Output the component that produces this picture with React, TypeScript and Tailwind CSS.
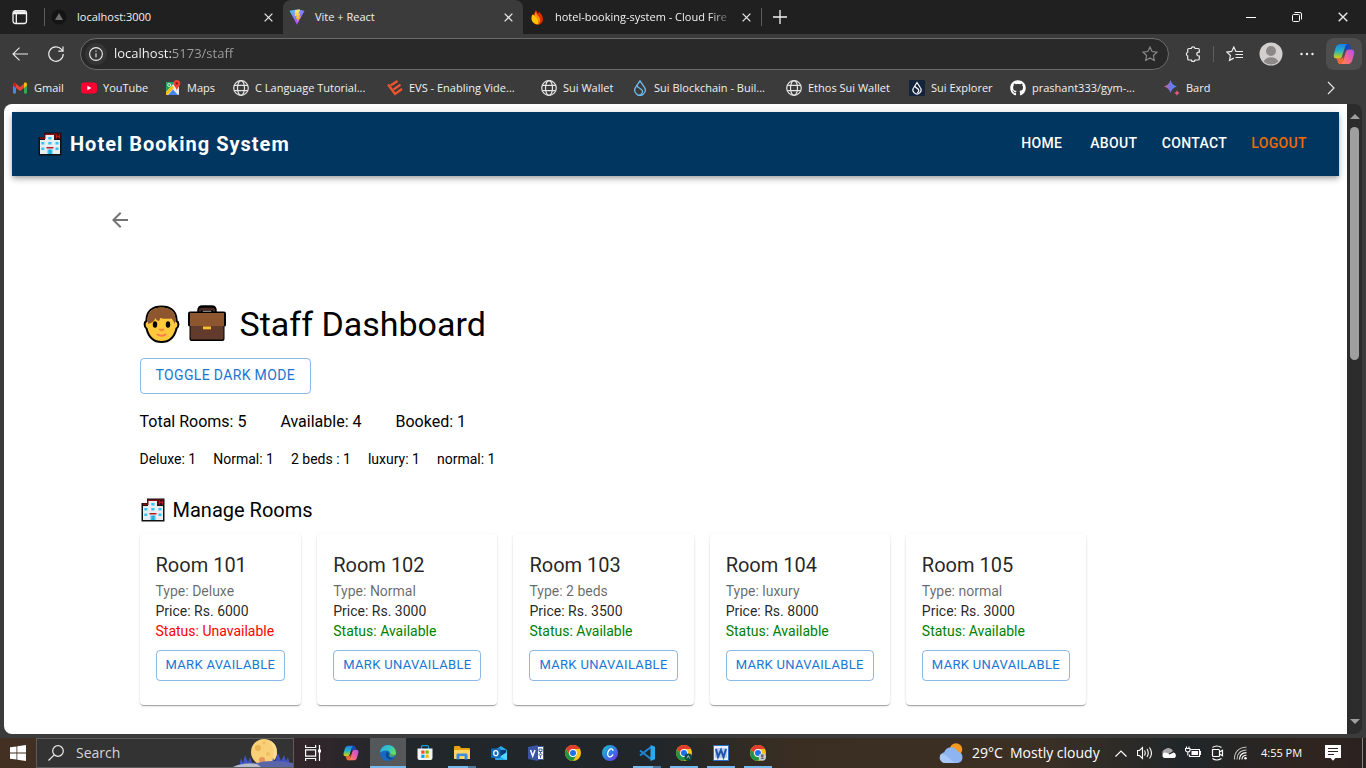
import React from "react";
import { FaGithub } from "react-icons/fa";

type IconProps = { className?: string };

/* ---------- brand marks ---------- */

function Globe({ className = "size-4" }: IconProps) {
  return (
    <svg viewBox="0 0 16 16" className={className} fill="none" stroke="#e4e4e4" strokeWidth="1.2" aria-hidden="true">
      <circle cx="8" cy="8" r="7.3" />
      <ellipse cx="8" cy="8" rx="3.5" ry="7.3" />
      <path d="M1.3 5.3h13.4M1.3 10.7h13.4" />
    </svg>
  );
}

function Gmail() {
  return (
    <svg viewBox="0 0 16 16" className="size-4" aria-hidden="true">
      <path fill="#4285f4" d="M1 4v9.4h3V7.5L1 5z" />
      <path fill="#34a853" d="M12 7.5v5.9h3V5z" />
      <path fill="#ea4335" d="M4 3.8 8 7l4-3.2V8L8 11 4 8z" />
      <path fill="#c5221f" d="M1 4.2C1 2.6 2.7 2 4 3v5L1 5.6z" />
      <path fill="#fbbc04" d="M15 4.2C15 2.6 13.300 2 12 3v5l3-2.400z" />
    </svg>
  );
}

function YouTube() {
  return (
    <svg viewBox="0 0 16 16" className="size-4" aria-hidden="true">
      <rect x="0" y="2.500" width="16" height="11" rx="3" fill="#ff0033" />
      <path fill="#fff" d="M6.400 5.700v4.600L10.400 8z" />
    </svg>
  );
}

function Maps() {
  return (
    <svg viewBox="0 0 16 16" className="size-4" aria-hidden="true">
      <rect x="1" y="2" width="13" height="13" rx="1" fill="#e9ecef" />
      <path fill="#1fa463" d="M2 2h8L1 12V3a1 1 0 0 1 1-1z" />
      <path fill="#fbbc04" d="m1 12 6-6.500L9 8l-7 7H1z" />
      <path fill="#4285f4" d="M3 15 8 9.500l5 5.500z" />
      <circle cx="4.200" cy="5" r="1.500" fill="none" stroke="#fff" strokeWidth=".8" />
      <path fill="#ea4335" d="M11.800 0a3.500 3.500 0 0 1 3.500 3.500c0 2.500-2.500 3-3.500 7-1-4-3.500-4.500-3.500-7A3.500 3.500 0 0 1 11.800 0z" />
      <circle cx="11.800" cy="3.500" r="1.300" fill="#8f1d14" />
    </svg>
  );
}

function Evs() {
  return (
    <svg viewBox="0 0 16 16" className="size-4" fill="none" stroke="#f2552c" strokeWidth="2.200" aria-hidden="true">
      <path d="M1 4.500 8 14l7-5" />
      <path d="m3.500 5.500 7-4.500M6.500 9.500l7-4.800" />
    </svg>
  );
}

function SuiDrop({ color = "#6fbcf0" }: { color?: string }) {
  return (
    <svg viewBox="0 0 16 16" className="size-4" fill="none" stroke={color} strokeWidth="1.300" aria-hidden="true">
      <path d="M8 .8 12.300 7.200a5.200 5.200 0 1 1-8.600 0z" />
      <path d="M5.200 5.300c-.5 3.200 6 2.700 5.300 6.700-.3 1.600-1.500 2.500-3 2.900" />
    </svg>
  );
}

function SuiTile() {
  return (
    <svg viewBox="0 0 16 16" className="size-4" aria-hidden="true">
      <path fill="#14243d" d="M0 0h16v16H0z" />
      <g fill="none" stroke="#fff" strokeWidth="1.200">
        <path d="m8 2.500 3.200 5a4 4 0 1 1-6.400 0z" />
        <path d="M6 6c-.2 2.300 4.300 2 3.800 4.800-.2 1-.9 1.700-1.800 1.900" />
      </g>
    </svg>
  );
}

function Bard() {
  return (
    <svg viewBox="0 0 16 16" className="size-4" aria-hidden="true">
      <defs>
        <linearGradient id="bard" x1="0" x2="1">
          <stop offset="0" stopColor="#e4607d" />
          <stop offset=".45" stopColor="#7a72e8" />
          <stop offset="1" stopColor="#2f9bf0" />
        </linearGradient>
      </defs>
      <path fill="url(#bard)" d="M6.500 0C7.800 3.700 9.300 5.200 13 6.500 9.300 7.800 7.800 9.300 6.500 13 5.200 9.300 3.700 7.800 0 6.500 3.700 5.200 5.200 3.700 6.500 0z" />
      <path fill="#dc5f83" d="M13 10.200c.6 1.700 1.200 2.300 3 2.900-1.800.6-2.400 1.200-3 2.900-.6-1.700-1.200-2.300-3-2.900 1.800-.6 2.400-1.200 3-2.900z" />
    </svg>
  );
}

function ViteLogo() {
  return (
    <svg viewBox="0 0 16 16" className="size-4" aria-hidden="true">
      <defs>
        <linearGradient id="viteBody" x1="0" y1="0" x2=".6" y2="1">
          <stop offset="0" stopColor="#41d1ff" />
          <stop offset="1" stopColor="#bd34fe" />
        </linearGradient>
        <linearGradient id="viteBolt" x1="0" y1="0" x2="0" y2="1">
          <stop offset="0" stopColor="#ffea83" />
          <stop offset="1" stopColor="#ffa800" />
        </linearGradient>
      </defs>
      <path fill="url(#viteBody)" d="M.5 1.700 8 .5l7.500 1.200L8 15.800z" />
      <path fill="url(#viteBolt)" d="M11.200.2 6 1.200l-.4 6 2-.4-.5 3.300 1.500-.4-.8 3.800L12 7.500l-2 .3 1.200-3.200-1.700.2z" />
    </svg>
  );
}

function FirebaseFlame() {
  return (
    <svg viewBox="0 0 16 16" className="size-4" aria-hidden="true">
      <path fill="#dd2c00" d="M7 1c1 1.500 1.300 2.500 1.500 3.500L10 3c2.500 2 4 4.500 4 7a5.500 5.500 0 0 1-9 4.500L4 8c.3-3 1.800-4.500 3-7z" />
      <path fill="#ffc400" d="M3.500 5.500C7 7 9.500 9 9.500 15A5.600 5.600 0 0 1 2.500 9c0-1.500.4-2.500 1-3.500z" />
      <path fill="#ff9100" d="M7 2.500c-1 2-1.500 3.200-1.200 4.500 2.600 2 3.700 4 3.700 8a5.500 5.500 0 0 0 .3-7.500C8 6 7.400 4.500 7 2.500z" />
    </svg>
  );
}

function Copilot({ className = "size-6", id }: IconProps & { id: string }) {
  return (
    <svg viewBox="0 0 24 24" className={className} aria-hidden="true">
      <defs>
        <linearGradient id={id + "a"} x1="0" y1="0" x2="0" y2="1">
          <stop offset="0" stopColor="#1c7fe8" />
          <stop offset=".5" stopColor="#27b6c4" />
          <stop offset=".8" stopColor="#97c93c" />
          <stop offset="1" stopColor="#f4c21c" />
        </linearGradient>
        <linearGradient id={id + "b"} x1="1" y1="0" x2="0" y2="1">
          <stop offset="0" stopColor="#a353ee" />
          <stop offset=".5" stopColor="#ed5fa0" />
          <stop offset="1" stopColor="#ff8a3c" />
        </linearGradient>
      </defs>
      <path fill="#1748b8" d="M13 1h3c2 0 2.600 1.300 3.200 3.500L20 7h-4c-2 0-2.700 1-3.300 3z" />
      <path fill="#ef6a35" d="M11 23H8c-2 0-2.600-1.300-3.200-3.500L4 17h4c2 0 2.700-1 3.300-3z" />
      <path fill={"url(#" + id + "a)"} d="M8.500 1h7c-1.400.5-2 2-2.600 4l-2.800 9c-.6 2-1.600 3-3.600 3H4c-2.700 0-3.800-1.800-3-5L3 5c.8-2.600 2.600-4 5.500-4z" />
      <path fill={"url(#" + id + "b)"} d="M15.500 23h-7c1.400-.5 2-2 2.600-4l2.800-9c.6-2 1.600-3 3.600-3H20c2.700 0 3.800 1.800 3 5l-2 7c-.8 2.600-2.600 4-5.500 4z" />
    </svg>
  );
}

function Hospital({ className }: IconProps) {
  return (
    <svg viewBox="0 0 24 24" className={className} role="img" aria-label="Hotel">
      <path fill="#111" d="M6 .5h17.500v23H.5V5H6z" />
      <path fill="#e8eef1" d="M2 8h5V3h9v5h6v14H2z" />
      <path fill="#8d1018" d="M6.500 1.500h16V7h-6V3h-9v4H2V5.500h4.500z" />
      <path fill="#2b0608" d="M17.500 2H23v5h-5.500z" />
      <path fill="#b51c28" d="M18 2.500h1.200v1.300h1.600V2.500H22v4h-1.200V5h-1.600v1.500H18zM8.500 15h7v1.500h-7z" />
      <path fill="#38c4f1" d="M10.300 5h3.200v2.500h-3.200zM3.300 10h3v2.500h-3zM10.300 10h3.200v2.500h-3.200zM17.500 10h3v2.500h-3zM3.300 15.500h3V18h-3zM17.500 15.500h3V18h-3zM9.500 17.500h5V22h-5z" />
      <path fill="#1687b8" d="M11.700 17.500h.7V22h-.7z" />
    </svg>
  );
}

function Person() {
  return (
    <svg viewBox="0 0 42 42" className="size-[42px]" role="img" aria-label="Staff member">
      <path d="M21.500 3.500C12.500 3.500 7 8 6.500 16v2c-2.500 1-2.500 6 0 7.500C8.500 34 14 39 21.500 39s13-5 15-13.500c2.500-1.500 2.500-6.500 0-7.500v-2C36 8 30.500 3.500 21.500 3.500z" fill="#ffc83d" stroke="#000" strokeWidth="2" />
      <path fill="#8e562e" d="M21.500 4.500C13 4.500 7.800 9 7.500 15.500l.8 5.500c3.700-1 6.200-3 7.200-6 .5 1.700 1.500 2.500 3 3 1-.5 1.500-1.500 1.500-3 4.500 1 8.500 1 11.500.5 1.500 1.500 2.500 3.300 3.200 5.500l.8-5.500C35.200 9 30 4.500 21.500 4.500z" />
      <ellipse cx="15" cy="21.500" rx="2.200" ry="3.300" />
      <ellipse cx="28" cy="21.500" rx="2.200" ry="3.300" />
      <path d="M20 26.500q1.700 1.500 3.400 0" stroke="#f78a3c" strokeWidth="2" fill="none" strokeLinecap="round" />
      <path d="M17.500 31.500q4 2.500 8 0" stroke="#fb7a4c" strokeWidth="2" fill="none" strokeLinecap="round" />
    </svg>
  );
}

function Briefcase() {
  return (
    <svg viewBox="0 0 42 42" className="size-[42px]" role="img" aria-label="Briefcase">
      <path d="M14 9V7.500Q14 5 16.500 5h9Q28 5 28 7.500V9" fill="none" stroke="#000" strokeWidth="5.500" />
      <path d="M14 10V7.500Q14 6 16 6h10q2 0 2 1.500V10" fill="none" stroke="#4b2a24" strokeWidth="2.500" />
      <path d="M4 8.500h34q2 0 2 2v11.500q0 1-1.500 1.500V36q0 2-2 2h-31q-2 0-2-2V23.500Q2 23 2 22V10.500q0-2 2-2z" fill="#000" />
      <path d="M4.500 22h33v13q0 1.500-1.500 1.500H6q-1.500 0-1.500-1.500z" fill="#633b2d" />
      <path d="M4 10h34v13H4z" fill="#8e562e" />
      <path d="M17 23.500h8v2.800h-8z" fill="#f9c22b" />
    </svg>
  );
}

/* ---------- browser chrome ---------- */

function CloseIcon({ className = "size-[9px]" }: IconProps) {
  return (
    <svg viewBox="0 0 10 10" className={className} fill="none" stroke="#e8e8e8" strokeWidth="1.400" aria-hidden="true">
      <path d="m.7.700 8.600 8.600M9.300.7.700 9.300" />
    </svg>
  );
}

function Tab({ title, icon, active = false, faded = false }: { title: string; icon: React.ReactNode; active?: boolean; faded?: boolean }) {
  return (
    <div className={active ? "flex w-60 items-center rounded-t-lg bg-[#3b3b3b] pl-1.5 pr-2.5" : "flex w-[238px] items-center pl-1.5 pr-2.5"}>
      {icon}
      <button
        type="button"
        className={
          faded
            ? "ml-2.5 min-w-0 flex-1 whitespace-nowrap text-left [mask-image:linear-gradient(to_right,#000_86%,transparent)]"
            : "ml-2.5 min-w-0 flex-1 whitespace-nowrap text-left"
        }
      >
        {title}
      </button>
      <button type="button" aria-label={"Close " + title} className="ml-2">
        <CloseIcon />
      </button>
    </div>
  );
}

function TabStrip() {
  return (
    <header className="flex h-[34px] shrink-0 bg-[#202020] text-[11px] text-[#f1f1f1]">
      <button type="button" aria-label="Tab actions" className="flex w-11 items-center pl-3">
        <svg viewBox="0 0 16 16" className="size-4" fill="none" stroke="#f4f4f4" strokeWidth="1.300" aria-hidden="true">
          <rect x="1" y="1.700" width="13.500" height="12.800" rx="2.500" />
          <path d="M1 4.500h13.500M4.300 4.500v10" />
          <path d="M2 3.200h11.500" strokeWidth="2" />
        </svg>
      </button>
      <span className="my-2 w-px bg-[#5c5c5c]" />
      <Tab
        title="localhost:3000"
        icon={
          <svg viewBox="0 0 16 16" className="size-4 shrink-0" aria-hidden="true">
            <circle cx="8" cy="8" r="7.500" fill="#141414" />
            <path d="m8 4 4 7H4z" fill="#6f6f6f" />
          </svg>
        }
      />
      <Tab title="Vite + React" active icon={<ViteLogo />} />
      <Tab title="hotel-booking-system - Cloud Fire" faded icon={<FirebaseFlame />} />
      <span className="my-2 w-px bg-[#5c5c5c]" />
      <button type="button" aria-label="New tab" className="flex w-9 items-center justify-center">
        <svg viewBox="0 0 14 14" className="size-3.5" stroke="#f4f4f4" strokeWidth="1.300" aria-hidden="true">
          <path d="M7 0v14M0 7h14" />
        </svg>
      </button>
      <div className="ml-auto flex">
        <button type="button" aria-label="Minimize" className="flex w-[46px] items-center justify-center">
          <span className="h-px w-2.5 bg-white" />
        </button>
        <button type="button" aria-label="Restore" className="flex w-[46px] items-center justify-center">
          <svg viewBox="0 0 10 10" className="size-2.5" fill="none" stroke="#fff" aria-hidden="true">
            <rect x=".5" y="2.500" width="7" height="7" rx="1" />
            <path d="M2.500.5H8q1.500 0 1.500 1.500v5.500" />
          </svg>
        </button>
        <button type="button" aria-label="Close window" className="flex w-[46px] items-center justify-center">
          <CloseIcon className="size-2.5" />
        </button>
      </div>
    </header>
  );
}

const starPath = "m8 1 2.100 4.500 4.900.6-3.600 3.400.9 4.900L8 12l-4.300 2.400.9-4.900L1 6.100l4.900-.6z";

function Toolbar() {
  return (
    <div className="flex h-10 shrink-0 items-center pr-1 text-white">
      <button type="button" aria-label="Back" className="ml-2.5 flex w-5 justify-center">
        <svg viewBox="0 0 16 14" className="h-3.5 w-4" fill="none" stroke="#ececec" strokeWidth="1.100" aria-hidden="true">
          <path d="M16 7H1M7.500.7 1 7l6.500 6.300" />
        </svg>
      </button>
      <button type="button" aria-label="Refresh" className="ml-4 flex w-5 justify-center">
        <svg viewBox="0 0 16 16" className="size-4" fill="none" stroke="#ececec" strokeWidth="1.200" aria-hidden="true">
          <path d="M15.200 8A7.200 7.200 0 1 1 13.500 3.400L14.800 5" />
          <path d="M15 .5V5.200h-4.700" />
        </svg>
      </button>
      <div className="ml-3.5 flex h-8 min-w-0 flex-1 items-center rounded-full border border-[#6b6b6b] bg-[#292929] pl-1 pr-2.5">
        <span className="flex size-[22px] items-center justify-center rounded-full bg-[#353535]">
          <svg viewBox="0 0 14 14" className="size-3.5" fill="none" stroke="#ececec" strokeWidth="1.100" aria-hidden="true">
            <circle cx="7" cy="7" r="6.400" />
            <path d="M7 6.200v4M7 3.500v1.300" />
          </svg>
        </span>
        <input
          aria-label="Address"
          defaultValue="localhost:5173/staff"
          className="ml-[7px] min-w-0 flex-1 bg-transparent bg-linear-to-r from-white from-[57px] to-[#a0a0a0] to-[57px] bg-clip-text text-[13px] text-transparent outline-none"
        />
        <button type="button" aria-label="Add to favorites">
          <svg viewBox="0 0 16 16" className="size-4" fill="none" stroke="#8d8d8d" strokeWidth="1.100" aria-hidden="true">
            <path d={starPath} />
          </svg>
        </button>
      </div>
      <button type="button" aria-label="Extensions" className="ml-4 flex size-4">
        <svg viewBox="0 0 16 16" className="size-4" fill="none" stroke="#ececec" strokeWidth="1.200" aria-hidden="true">
          <path d="M4 2.500h2.200a2 2 0 0 1 3.900 0H13q1.300 0 1.300 1.300v2.400h-.6a1.900 1.900 0 1 0 0 3.800h.6v2.700q0 1.300-1.300 1.300H10.100a2 2 0 0 1-3.900 0H4q-1.300 0-1.300-1.300V10a2 2 0 0 1 0-3.800V3.800Q2.700 2.500 4 2.500z" />
        </svg>
      </button>
      <span className="ml-3 h-4 w-px bg-[#5f5f5f]" />
      <button type="button" aria-label="Favorites" className="ml-3 flex">
        <svg viewBox="0 0 17 16" className="h-4 w-[17px]" fill="none" stroke="#ececec" strokeWidth="1.200" aria-hidden="true">
          <path d="M10.500 5.500 9.900 5.400 7.800 1 5.700 5.400.9 6.100l3.500 3.400-.9 4.900 4.300-2.300M10.500 5.500H17M9.500 8.500H17M9.500 11.500H17" />
        </svg>
      </button>
      <button type="button" aria-label="Profile" className="ml-4 flex">
        <svg viewBox="0 0 24 24" className="size-6" aria-hidden="true">
          <circle cx="12" cy="12" r="11.500" fill="#d2d0ce" />
          <circle cx="12" cy="9" r="5" fill="#8b8885" />
          <path d="M4.500 19.500Q7 15.200 12 15.200t7.500 4.300A11 11 0 0 1 12 22.500a11 11 0 0 1-7.500-3z" fill="#8b8885" />
        </svg>
      </button>
      <button type="button" aria-label="Settings and more" className="ml-4 flex">
        <svg viewBox="0 0 16 16" className="size-4" fill="#f4f4f4" aria-hidden="true">
          <circle cx="2.500" cy="8" r="1.200" />
          <circle cx="8" cy="8" r="1.200" />
          <circle cx="13.500" cy="8" r="1.200" />
        </svg>
      </button>
      <button type="button" aria-label="Copilot" className="ml-[11px] flex h-8 w-9 items-center justify-center rounded-lg bg-[#4e4e4e]">
        <Copilot id="cpTop" className="size-[22px]" />
      </button>
    </div>
  );
}

const bookmarks: { label: string; icon: React.ReactNode; width: string }[] = [
  { label: "Gmail", icon: <Gmail />, width: "w-[69px]" },
  { label: "YouTube", icon: <YouTube />, width: "w-[84px]" },
  { label: "Maps", icon: <Maps />, width: "w-[68px]" },
  { label: "C Language Tutorial...", icon: <Globe />, width: "w-[154px]" },
  { label: "EVS - Enabling Vide...", icon: <Evs />, width: "w-[154px]" },
  { label: "Sui Wallet", icon: <Globe />, width: "w-[91px]" },
  { label: "Sui Blockchain - Buil...", icon: <SuiDrop />, width: "w-[154px]" },
  { label: "Ethos Sui Wallet", icon: <Globe />, width: "w-[123px]" },
  { label: "Sui Explorer", icon: <SuiTile />, width: "w-[101px]" },
  { label: "prashant333/gym-...", icon: <FaGithub className="size-4 text-white" />, width: "w-[154px]" },
  { label: "Bard", icon: <Bard />, width: "w-[70px]" },
];

function BookmarksBar() {
  return (
    <nav aria-label="Favorites bar" className="flex h-[30px] shrink-0 items-center pb-0.5 pl-3 pr-[31px] text-[11px] text-[#f1f1f1]">
      {bookmarks.map((b) => (
        <a key={b.label} href="#" className={"flex items-center gap-1.5 whitespace-nowrap " + b.width}>
          <span className="shrink-0">{b.icon}</span>
          {b.label}
        </a>
      ))}
      <button type="button" aria-label="More favorites" className="ml-auto">
        <svg viewBox="0 0 8 14" className="h-3.5 w-2" fill="none" stroke="#e4e4e4" strokeWidth="1.200" aria-hidden="true">
          <path d="m1 1 6 6-6 6" />
        </svg>
      </button>
    </nav>
  );
}

/* ---------- the web page ---------- */

type Room = { number: number; type: string; price: number; available: boolean };

const rooms: Room[] = [
  { number: 101, type: "Deluxe", price: 6000, available: false },
  { number: 102, type: "Normal", price: 3000, available: true },
  { number: 103, type: "2 beds", price: 3500, available: true },
  { number: 104, type: "luxury", price: 8000, available: true },
  { number: 105, type: "normal", price: 3000, available: true },
];

function RoomCard({ room }: { room: Room }) {
  return (
    <article className="rounded bg-white px-4 pb-6 pt-4 text-sm/5 text-black/87 shadow-[0_2px_1px_-1px_rgba(0,0,0,0.2),0_1px_1px_0_rgba(0,0,0,0.14),0_1px_3px_0_rgba(0,0,0,0.12)]">
      <h3 className="text-xl/[31px]">Room {room.number}</h3>
      <p className="text-black/60">Type: {room.type}</p>
      <p>Price: Rs. {room.price}</p>
      <p className={room.available ? "text-[#008000]" : "text-[#ff0000]"}>Status: {room.available ? "Available" : "Unavailable"}</p>
      <button type="button" className="mt-[9px] h-[31px] whitespace-nowrap rounded border border-[#1976d2]/50 px-[9px] pb-0.5 text-[13px] tracking-wide text-[#1976d2]">
        {room.available ? "MARK UNAVAILABLE" : "MARK AVAILABLE"}
      </button>
    </article>
  );
}

function HotelPage() {
  return (
    <main className="min-w-0 flex-1 overflow-hidden rounded-l-lg bg-white p-2 font-['Roboto',sans-serif] text-black">
      <div className="flex h-16 items-center bg-[#003660] px-6 text-white shadow-[0_2px_4px_-1px_rgba(0,0,0,0.2),0_4px_5px_0_rgba(0,0,0,0.14),0_1px_10px_0_rgba(0,0,0,0.12)]">
        <h1 className="ml-0.5 flex items-center gap-2 text-xl font-bold tracking-wider">
          <Hospital className="size-6" />
          Hotel Booking System
        </h1>
        <nav className="ml-auto flex gap-2 pb-0.5 text-sm font-medium tracking-wide">
          <a href="#" className="min-w-16 px-2 text-center">HOME</a>
          <a href="#" className="min-w-16 px-2 text-center">ABOUT</a>
          <a href="#" className="px-2">CONTACT</a>
          <a href="#" className="px-2 text-[#ef6c00]">LOGOUT</a>
        </nav>
      </div>
      <div className="mx-auto max-w-[1200px] px-6 pt-6">
        <button type="button" aria-label="Go back" className="flex size-10 items-center justify-center text-black/55">
          <svg viewBox="0 0 24 24" className="size-6" fill="currentColor" aria-hidden="true">
            <path d="M20 11H7.830l5.590-5.590L12 4l-8 8 8 8 1.410-1.410L7.830 13H20z" />
          </svg>
        </button>
        <section className="mt-16 pl-10">
          <h2 className="flex h-10 items-center text-[34px]">
            <Person />
            <span className="ml-1 mr-3 flex"><Briefcase /></span>
            Staff Dashboard
          </h2>
          <button type="button" className="mt-3.5 block h-9 rounded border border-[#1976d2]/50 px-[15px] pb-0.5 text-sm tracking-wide text-[#1976d2]">
            TOGGLE DARK MODE
          </button>
          <div className="mt-4 flex gap-[34px] text-base/6">
            <p>Total Rooms: 5</p>
            <p>Available: 4</p>
            <p>Booked: 1</p>
          </div>
          <div className="mt-[15px] flex gap-[17px] text-sm/5">
            <p>Deluxe: 1</p>
            <p>Normal: 1</p>
            <p>2 beds : 1</p>
            <p>luxury: 1</p>
            <p>normal: 1</p>
          </div>
          <h2 className="mt-[25px] flex items-center gap-2 pl-px text-xl/8">
            <Hospital className="size-6" />
            Manage Rooms
          </h2>
          <div className="mt-2 flex gap-4">
            {rooms.map((r) => (
              <RoomCard key={r.number} room={r} />
            ))}
          </div>
        </section>
      </div>
    </main>
  );
}

function Scrollbar() {
  return (
    <div aria-hidden="true" className="flex w-[15px] shrink-0 flex-col items-center rounded-r-lg bg-[#2c2c2c] py-2.5">
      <span className="border-x-[5px] border-b-[5px] border-x-transparent border-b-[#9f9f9f]" />
      <span className="mt-2 h-[233px] w-[9px] rounded-full bg-[#9f9f9f]" />
      <span className="mt-auto border-x-[5px] border-t-[5px] border-x-transparent border-t-[#9f9f9f]" />
    </div>
  );
}

/* ---------- taskbar ---------- */

function Chrome({ children }: { children?: React.ReactNode }) {
  return (
    <svg viewBox="0 0 16 16" className="size-4" aria-hidden="true">
      <circle cx="8" cy="8" r="8" fill="#fbc116" />
      <path fill="#e33b2e" d="M1.100 4A8 8 0 0 1 14.900 4H8L5 10z" />
      <path fill="#229342" d="M1.100 4A8 8 0 0 0 8 16l3.500-6H4.600z" />
      <circle cx="8" cy="8" r="3.900" fill="#fff" />
      <circle cx="8" cy="8" r="3" fill="#1a73e8" />
      {children}
    </svg>
  );
}

function EdgeLogo() {
  return (
    <svg viewBox="0 0 16 16" className="size-4" aria-hidden="true">
      <defs>
        <linearGradient id="edgeTop" x1="0" x2="1" y2=".5">
          <stop offset="0" stopColor="#2aa9e8" />
          <stop offset=".6" stopColor="#35c6c0" />
          <stop offset="1" stopColor="#66e05a" />
        </linearGradient>
      </defs>
      <circle cx="8" cy="8" r="8" fill="#1769c4" />
      <path fill="url(#edgeTop)" d="M0 8a8 8 0 0 1 16 0c0 2.500-1.800 3.800-4 3.800-2.500 0-3.200-1-2.500-2 1.200-2-.2-4.300-3-4.300C3.500 5.500.5 6.500 0 8z" />
      <path fill="#0d4a94" d="M6 8c-1.200 3.500 1.500 7 6 6.300 1.200-.3 2-.9 2.500-1.500-3 1.200-6-.3-6-2.800 0-1 .3-1.500.6-2C8.300 7 6.600 7 6 8z" />
      <path fill="#4a5a66" d="M9 8.300c-.8 1.700.5 3.500 3.300 3.400 1.700 0 3-.7 3.500-2A12 12 0 0 1 9 8.300z" opacity=".5" />
    </svg>
  );
}

function StoreLogo() {
  return (
    <svg viewBox="0 0 16 16" className="size-4" aria-hidden="true">
      <path d="M4.500 4V1.800Q4.500.700 5.600.700h4.800q1.100 0 1.100 1.100V4" fill="none" stroke="#1c9bd8" strokeWidth="1.200" />
      <path d="M.5 3.500h15V13q0 2-2 2h-11q-2 0-2-2z" fill="#f4f4f4" />
      <path fill="#f25022" d="M4.300 5.500h3.200v3.200H4.300z" />
      <path fill="#7fba00" d="M8.500 5.500h3.200v3.200H8.500z" />
      <path fill="#00a4ef" d="M4.300 9.700h3.200v3.200H4.300z" />
      <path fill="#ffb900" d="M8.500 9.700h3.200v3.200H8.500z" />
    </svg>
  );
}

function ExplorerLogo() {
  return (
    <svg viewBox="0 0 16 16" className="size-4" aria-hidden="true">
      <path fill="#e8a311" d="M0 2q0-1 1-1h4.500L7 3h8q1 0 1 1v3H0z" />
      <path fill="#ffd664" d="M0 5h16v9H0z" />
      <path fill="#3b8ede" d="M2.500 14.500V9.800q0-1.300 1.300-1.300h8.400q1.300 0 1.300 1.300v4.700h-3V11h-5v3.500z" />
    </svg>
  );
}

function OutlookLogo() {
  return (
    <svg viewBox="0 0 16 16" className="size-4" aria-hidden="true">
      <path fill="#28a8ea" d="M4 5 10 1l6 4v9q0 1-1 1H5q-1 0-1-1z" />
      <path fill="#123b6d" d="M5 5h10v4l-5 3-5-3z" />
      <path fill="#50d9ff" d="m16 7-7 4.500 6 3.500q1 0 1-1z" />
      <rect y="3.500" width="9.500" height="9.500" rx="1" fill="#0f6cbd" />
      <ellipse cx="4.800" cy="8.200" rx="2.100" ry="2.500" fill="none" stroke="#fff" strokeWidth="1.300" />
    </svg>
  );
}

function VisioLogo() {
  return (
    <svg viewBox="0 0 16 16" className="size-4" aria-hidden="true">
      <path fill="#3955a3" d="M0 2 10 0v16L0 14z" />
      <path fill="#fff" stroke="#3955a3" d="M9.500 1.500h6v13h-6z" />
      <path d="m2.500 5 2.200 6L7 5" stroke="#fff" strokeWidth="1.500" fill="none" />
      <path d="M11 4h3v2.500h-3zM11 9.500l1.500-1.500L14 9.500 12.500 11zM12.500 6.500V8M12.500 11v2" fill="none" stroke="#3955a3" />
    </svg>
  );
}

function CanvaLogo() {
  return (
    <svg viewBox="0 0 16 16" className="size-4" aria-hidden="true">
      <defs>
        <linearGradient id="canva" x1="0" y1="0" x2="1" y2="1">
          <stop offset="0" stopColor="#20c4cb" />
          <stop offset=".5" stopColor="#2d7fe6" />
          <stop offset="1" stopColor="#7d2ae8" />
        </linearGradient>
      </defs>
      <circle cx="8" cy="8" r="8" fill="url(#canva)" />
      <path d="M11 5.300C10.600 3.500 8.500 3.500 7 5.200 5.300 7.200 5 11 7.200 11.800c1.400.4 2.700-.5 3.600-2" stroke="#fff" strokeWidth="1.300" fill="none" strokeLinecap="round" />
    </svg>
  );
}

function VsCodeLogo() {
  return (
    <svg viewBox="0 0 16 16" className="size-4" aria-hidden="true">
      <path d="M1 5.500 12 14M1 10.500 12 2" stroke="#1d84cc" strokeWidth="2.200" />
      <path fill="#29a9ee" d="m11.500 0 4.500 1.800v12.400L11.500 16z" />
    </svg>
  );
}

function WordLogo() {
  return (
    <svg viewBox="0 0 16 16" className="size-4" aria-hidden="true">
      <path fill="#e9f0fa" stroke="#2b6cc4" d="M.5.5h15v15H.5z" />
      <path fill="#2a65b8" d="M2 3h12v10H2z" opacity=".25" />
      <path d="m3 4 2 8 3-7 2.500 7L13 4" stroke="#1b56ad" strokeWidth="2" fill="none" />
    </svg>
  );
}

const apps: { name: string; icon: React.ReactNode; running?: boolean; active?: boolean; stacked?: boolean }[] = [
  { name: "Copilot", icon: <Copilot id="cpBar" className="size-4" /> },
  { name: "Edge", icon: <EdgeLogo />, active: true },
  { name: "Store", icon: <StoreLogo /> },
  { name: "File Explorer", icon: <ExplorerLogo />, running: true, stacked: true },
  { name: "Outlook", icon: <OutlookLogo /> },
  { name: "Visio", icon: <VisioLogo /> },
  { name: "Chrome", icon: <Chrome /> },
  { name: "Canva", icon: <CanvaLogo /> },
  { name: "VS Code", icon: <VsCodeLogo />, running: true, stacked: true },
  {
    name: "Chrome profile A",
    icon: (
      <Chrome>
        <circle cx="12.300" cy="12.200" r="3.700" fill="#0b4a3c" />
        <path d="m12.300 10.500 1.400 3M12.300 10.500l-1.400 3" stroke="#cfe8df" strokeWidth=".7" />
      </Chrome>
    ),
    running: true,
  },
  { name: "Word", icon: <WordLogo />, running: true },
  {
    name: "Chrome profile B",
    icon: (
      <Chrome>
        <circle cx="12.300" cy="12" r="3.700" fill="#c9c9cd" />
        <path d="M11 9.500h2.500v2.500H11zM10.500 14l1.800-2 2 2" fill="#6b6470" />
      </Chrome>
    ),
    running: true,
  },
];

function SearchArt() {
  return (
    <svg viewBox="0 0 60 28" className="h-7 w-[60px] shrink-0" aria-hidden="true">
      <circle cx="31" cy="13" r="13" fill="#f9cf78" />
      <path d="M35 .7a13 13 0 0 1 2 23.800C42 19 42 6 35 .7z" fill="#fbdc8e" />
      <circle cx="25" cy="9" r="3" fill="#e9b353" />
      <circle cx="35" cy="15" r="2" fill="#efbd60" />
      <circle cx="31" cy="4" r="1.500" fill="#efbd60" />
      <circle cx="29" cy="21" r="3" fill="#e8935c" />
      <path d="m6 28 2-9 2 5 2-8 3 7 2-5 3 9zM38 28l2-9 2 4 3-9 3 8 3-6 2 6 2-4 2 8z" fill="#4053c4" />
      <path d="M0 28q10-5 24-4 12-4 36 0v4z" fill="#5b66a8" />
      <path d="M0 28q10-5 24-3l4 3z" fill="#b5bccb" />
    </svg>
  );
}

function Taskbar() {
  return (
    <footer className="flex h-[30px] shrink-0 bg-[linear-gradient(to_right,#433022_0%,#32262a_22%,#22272b_29%,#20262a_48%,#3a2e22_58%,#3c3025_76%,#202628_87%,#30241f_96%,#2a2220_100%)] text-white">
      <button type="button" aria-label="Start" className="flex w-9 items-center justify-center">
        <svg viewBox="0 0 16 16" className="size-4" fill="#fff" aria-hidden="true">
          <path d="M0 2.300 6.500 1.400v6.200H0zM7.300 1.300 16 0v7.600H7.300zM0 8.400h6.500v6.200L0 13.700zM7.300 8.400H16V16l-8.700-1.300z" />
        </svg>
      </button>
      <label className="flex w-[258px] items-center border border-[#5c5c5c] bg-[#333] pl-[11px]">
        <svg viewBox="0 0 16 16" className="size-4 shrink-0" fill="none" stroke="#ececec" strokeWidth="1.200" aria-hidden="true">
          <circle cx="10" cy="6" r="5.300" />
          <path d="M6.200 9.800.500 15.500" />
        </svg>
        <input aria-label="Search" placeholder="Search" className="ml-3 min-w-0 flex-1 bg-transparent text-sm outline-none placeholder:text-[#d6d6d6]" />
        <SearchArt />
      </label>
      <button type="button" aria-label="Task view" className="flex w-[37px] items-center justify-center">
        <svg viewBox="0 0 16 16" className="size-4" fill="none" stroke="#fff" strokeWidth="1.200" aria-hidden="true">
          <path d="M.6 0v2.500h10V0M.6 16v-2.500h10V16M.6 4.800h10v6.400H.6zM14.500 0v16" />
          <path d="M13 4.500h3v3h-3z" fill="#fff" stroke="none" />
        </svg>
      </button>
      <div className="ml-0.5 flex gap-px">
        {apps.map((a) => (
          <button
            key={a.name}
            type="button"
            aria-label={a.name}
            className={a.active ? "flex w-9 flex-col items-center bg-[#54585b]" : "flex w-9 flex-col items-center"}
          >
            <span className="flex flex-1 items-center pt-0.5">{a.icon}</span>
            <span
              className={
                a.active
                  ? "h-0.5 w-full bg-[#76b9ed]"
                  : a.stacked
                    ? "h-0.5 w-7 bg-linear-to-r from-[#76b9ed] from-[70%] to-[#4d7a9c] to-[70%]"
                    : a.running
                      ? "h-0.5 w-7 bg-[#76b9ed]"
                      : "h-0.5 w-7"
              }
            />
          </button>
        ))}
      </div>
      <div className="ml-auto flex items-center">
        <svg viewBox="0 0 25 20" className="h-5 w-[25px]" aria-hidden="true">
          <circle cx="17" cy="6.500" r="6.200" fill="#f59a1f" />
          <path d="M6 20a5.500 5.500 0 0 1-.8-10.800 7.300 7.300 0 0 1 13.600-.7A5.900 5.900 0 0 1 19 20z" fill="#8fb4f2" />
          <path d="M6 20a5.500 5.500 0 0 1-4-9q6 1 9 5t8 4z" fill="#a9c8fa" />
        </svg>
        <span className="ml-2 w-[38px] text-sm">29°C</span>
        <span className="w-[103px] whitespace-nowrap text-sm">Mostly cloudy</span>
        <div className="flex items-center gap-2">
          <span className="flex w-4 justify-center">
            <svg viewBox="0 0 12 7" className="h-[7px] w-3" fill="none" stroke="#fff" strokeWidth="1.200" aria-label="Show hidden icons" role="img">
              <path d="m.5 6.500 5.500-5.500 5.500 5.500" />
            </svg>
          </span>
          <svg viewBox="0 0 16 16" className="size-4" fill="none" stroke="#fff" strokeWidth="1.100" role="img" aria-label="Volume">
            <path d="M.5 5.500h2L5.500 2.500v11l-3-3h-2zM7.500 5.500q1.500 2.500 0 5M10 4q2.500 4 0 8M12.500 2.500q4 5.500 0 11" />
          </svg>
          <svg viewBox="0 0 16 16" className="size-4" role="img" aria-label="OneDrive">
            <path fill="#a8a8a8" d="M1.500 9a4 4 0 0 1 3-5 5 5 0 0 1 7.500 2l-6 4z" />
            <path fill="#fff" d="M3 13a3 3 0 0 1 .5-5.500q3 0 5 2l4-2A3 3 0 0 1 13.500 13z" />
          </svg>
          <svg viewBox="0 0 16 16" className="size-4" fill="none" stroke="#fff" strokeWidth="1.100" role="img" aria-label="Battery charging">
            <path d="M5.500 4.500h9v7h-10v-2M14.500 6.500h1v3h-1" />
            <path d="M6.500 6h6.500v4H6.500z" fill="#fff" stroke="none" />
            <path d="M1.500 1.500v2M4 1.500v2M.5 3.500H5v2q-.5 1.500-2.200 1.500T.5 5.500zM2.800 7v3.500" />
          </svg>
          <svg viewBox="0 0 16 16" className="size-4" fill="none" stroke="#fff" strokeWidth="1.200" role="img" aria-label="Meet now">
            <path d="M3.500 4.500h6q1 0 1 1v5q0 1-1 1h-5q-1 0-1-1zM10.500 7l3-1.800v5.600l-3-1.800M3.500 2.500q4-3 9 0M3.500 13.500q4 3 9 0" />
          </svg>
          <svg viewBox="0 0 16 16" className="size-4" fill="none" stroke="#fff" strokeWidth="1.100" role="img" aria-label="Network">
            <path d="M1.500 14.500C1 7.500 6 2 13.500 2.300M4 14.500C3.800 9 7.500 5 13.500 5" opacity=".7" />
            <path d="M6.500 14.500c0-4 2.500-6.700 7-6.900M9 14.500c0-2.500 1.500-4.200 4.500-4.300" />
            <circle cx="12.500" cy="13.200" r="1.300" fill="#fff" stroke="none" />
          </svg>
        </div>
        <time className="ml-3 w-[62px] whitespace-nowrap text-[11px]">4:55 PM</time>
        <button type="button" aria-label="Notifications" className="ml-0.5 flex">
          <svg viewBox="0 0 16 16" className="size-4" aria-hidden="true">
            <path fill="#fff" d="M0 0h16v13h-5.500L8 15.800 5.500 13H0z" />
            <path d="M3 3.500h10M3 6.500h10M3 9.500h6" stroke="#2d2421" strokeWidth="1.100" />
          </svg>
        </button>
        <span className="ml-[21px] mr-[3px] h-[30px] w-px bg-[#8b8580]" />
      </div>
    </footer>
  );
}

export default function App() {
  return (
    <div className="flex h-screen flex-col overflow-hidden bg-[#3b3b3b] font-['Open_Sans','Noto_Sans',sans-serif]">
      <TabStrip />
      <Toolbar />
      <BookmarksBar />
      <div className="flex min-h-0 flex-1 px-1 pb-1">
        <HotelPage />
        <Scrollbar />
      </div>
      <Taskbar />
    </div>
  );
}
